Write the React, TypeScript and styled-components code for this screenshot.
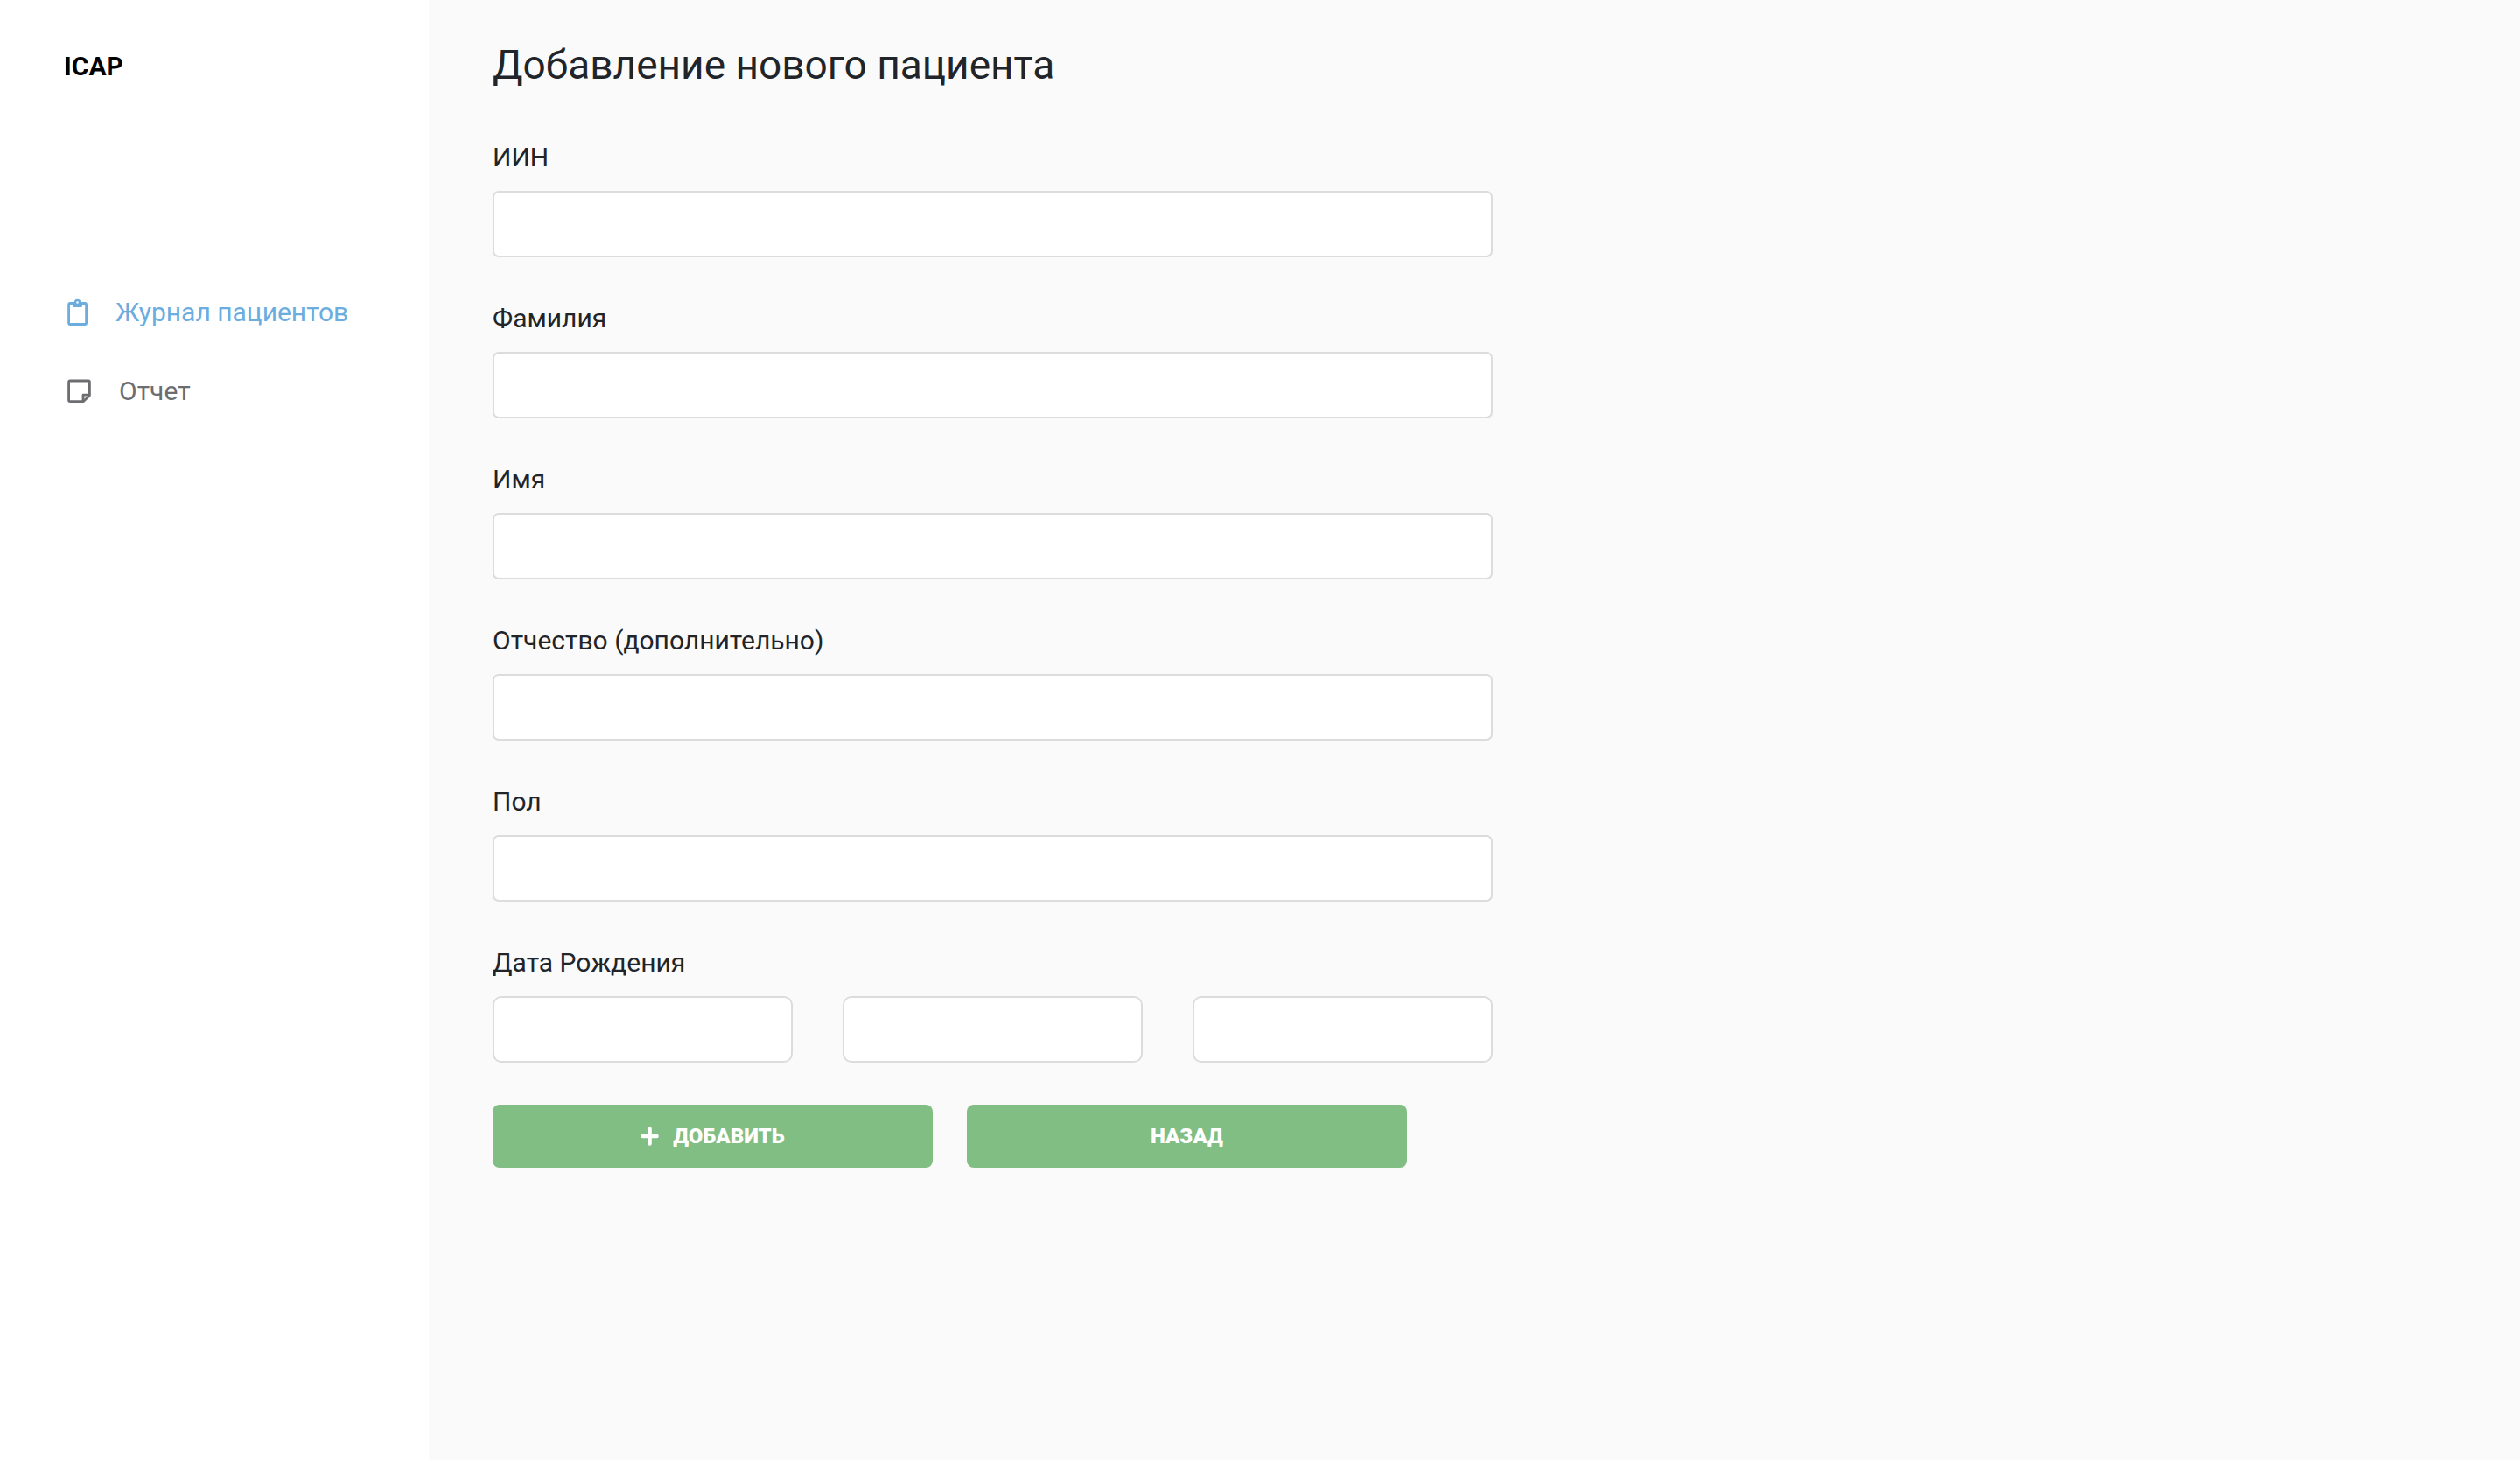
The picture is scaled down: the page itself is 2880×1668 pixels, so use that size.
import React from "react";
import styled, { createGlobalStyle } from "styled-components";

const GlobalStyle = createGlobalStyle`
  *, *::before, *::after { box-sizing: border-box; }
  body {
    margin: 0;
    background: #fafafa;
    color: #212529;
    font-family: Roboto, "Noto Sans", sans-serif;
    font-size: 30px;
    line-height: 44px;
  }
`;

const Page = styled.div`
  display: flex;
  min-height: 100vh;
`;

const Sidebar = styled.aside`
  flex: 0 0 490px;
  padding: 54px 73px;
  background: #ffffff;
`;

const Brand = styled.a`
  display: block;
  color: #000000;
  font-weight: 700;
  text-decoration: none;
`;

const Nav = styled.nav`
  display: flex;
  flex-direction: column;
  gap: 46px;
  margin-top: 237px;
  padding-left: 3px;
`;

const NavLink = styled.a<{ $active?: boolean }>`
  display: flex;
  align-items: center;
  gap: 32px;
  color: ${(p) => (p.$active ? "#6caddf" : "#6c6d70")};
  text-decoration: none;
  white-space: nowrap;

  svg { flex: none; }
`;

const Main = styled.main`
  flex: 1;
  min-width: 0;
  padding: 46px 73px;
`;

const Title = styled.h1`
  margin: 0 0 56px;
  font-size: 46px;
  font-weight: 400;
  line-height: 56px;
`;

const Form = styled.form`
  display: flex;
  flex-direction: column;
  gap: 48px;
  max-width: 1143px;
`;

const Field = styled.div`
  display: flex;
  flex-direction: column;
  gap: 16px;
`;

const DateGroup = styled.fieldset`
  min-width: 0;
  margin: 0;
  padding: 0;
  border: 0;
`;

const Legend = styled.legend`
  padding: 0;
  margin-bottom: 16px;
`;

const DateRow = styled.div`
  display: grid;
  grid-template-columns: repeat(3, 1fr);
  gap: 57px;
`;

const Input = styled.input<{ $round?: boolean }>`
  width: 100%;
  height: 76px;
  padding: 0 24px;
  border: 2px solid #dcdcdc;
  border-radius: ${(p) => (p.$round ? 10 : 7)}px;
  background: #ffffff;
  color: inherit;
  font: inherit;
`;

const Actions = styled.div`
  display: flex;
  gap: 39px;
`;

const Button = styled.button`
  display: flex;
  flex: 0 0 44%;
  align-items: center;
  justify-content: center;
  gap: 16px;
  height: 72px;
  padding: 0;
  border: 0;
  border-radius: 8px;
  background: #81be83;
  color: #ffffff;
  font-family: inherit;
  font-size: 24px;
  font-weight: 900;
  line-height: 36px;
  text-transform: uppercase;
`;

const ClipboardIcon = () => (
  <svg width="24" height="32" viewBox="0 0 24 32" fill="none" aria-hidden="true">
    <rect x="2.6" y="5.5" width="20" height="24" rx="1.6" stroke="currentColor" strokeWidth="2.8" />
    <path d="M7 5h11v3.4q0 1.6-1.6 1.6H8.6Q7 10 7 8.4z" fill="currentColor" />
    <circle cx="12.5" cy="4.6" r="2.5" fill="#fff" stroke="currentColor" strokeWidth="2.5" />
    <path d="M8.5 6.3h8v2.5h-8z" fill="currentColor" />
  </svg>
);

const NoteIcon = () => (
  <svg
    width="28"
    height="28"
    viewBox="0 0 28 28"
    fill="none"
    stroke="currentColor"
    strokeWidth="2.8"
    strokeLinejoin="round"
    aria-hidden="true"
  >
    <path d="M4 2h21q1.4 0 1.4 1.4V18.8L19.4 25.6H4q-1.4 0-1.4-1.4V3.4Q2.6 2 4 2z" />
    <path d="M26.4 18.2H19V25.6" />
  </svg>
);

const PlusIcon = () => (
  <svg
    width="21"
    height="22"
    viewBox="0 0 21 22"
    stroke="currentColor"
    strokeWidth="4.6"
    strokeLinecap="round"
    aria-hidden="true"
  >
    <path d="M10.5 2.5v17M2.5 11h16" />
  </svg>
);

const fields = [
  { id: "iin", label: "ИИН" },
  { id: "surname", label: "Фамилия" },
  { id: "name", label: "Имя" },
  { id: "patronymic", label: "Отчество (дополнительно)" },
  { id: "gender", label: "Пол" },
];

const dateParts = ["День", "Месяц", "Год"];

export default function App() {
  return (
    <>
      <GlobalStyle />
      <Page>
        <Sidebar>
          <Brand href="#">ICAP</Brand>
          <Nav>
            <NavLink href="#journal" $active>
              <ClipboardIcon />
              Журнал пациентов
            </NavLink>
            <NavLink href="#report">
              <NoteIcon />
              Отчет
            </NavLink>
          </Nav>
        </Sidebar>
        <Main>
          <Title>Добавление нового пациента</Title>
          <Form onSubmit={(e) => e.preventDefault()}>
            {fields.map((f) => (
              <Field key={f.id}>
                <label htmlFor={f.id}>{f.label}</label>
                <Input id={f.id} type="text" />
              </Field>
            ))}
            <DateGroup>
              <Legend>Дата Рождения</Legend>
              <DateRow>
                {dateParts.map((part) => (
                  <Input key={part} type="text" aria-label={part} $round />
                ))}
              </DateRow>
            </DateGroup>
            <Actions>
              <Button type="submit">
                <PlusIcon />
                Добавить
              </Button>
              <Button type="button">Назад</Button>
            </Actions>
          </Form>
        </Main>
      </Page>
    </>
  );
}
